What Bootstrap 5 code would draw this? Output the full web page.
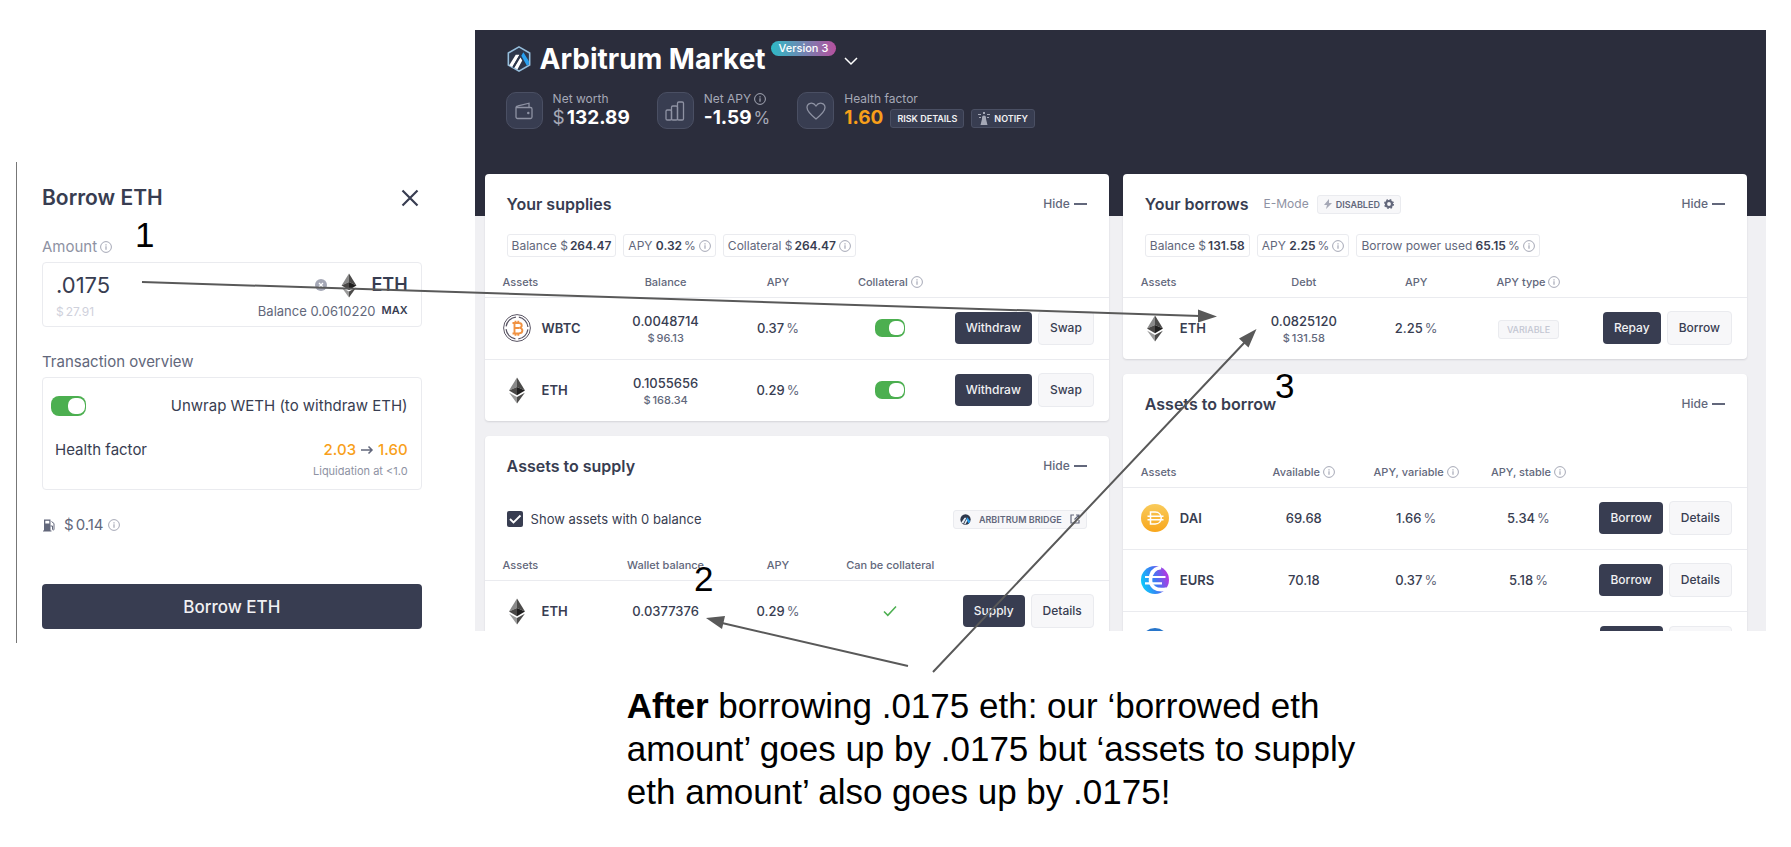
<!DOCTYPE html>
<html lang="en">
<head>
<meta charset="utf-8">
<meta name="viewport" content="width=device-width, initial-scale=1">
<title>Borrowing ETH on Arbitrum Market</title>
<link href="https://cdn.jsdelivr.net/npm/bootstrap@5.3.0/dist/css/bootstrap.min.css" rel="stylesheet">
<style>
  :root { --ink:#383d51; --muted:#62677b; --soft:#8e92a3; --line:#eaebef; --green:#4caf50; --orange:#f89f1a; }
  body { font-family:Inter,"Noto Sans",sans-serif; font-size:13px; line-height:20px; color:var(--ink); background:#fff; }
  h1,h2,p { margin:0; }
  svg { display:block; flex:none; }
  .stage { position:relative; }
  .ink { color:var(--ink); } .muted { color:var(--muted); } .soft { color:var(--soft); } .orange { color:var(--orange); }
  .i-info { width:12px; height:12px; color:#a5a8b6; }
  .near { display:flex; align-items:center; gap:3px; }
  .cur { margin-right:2px; }

  /* borrow dialog */
  .side { flex:none; width:26.5%; padding:162px 53px 0 16px; }
  .dialog { border-left:1px solid #777; padding:22px 0 14px 25px; font-size:15px; }
  .dialog h2 { font-size:21px; line-height:28px; font-weight:600; }
  .closer { background:none; border:0; padding:0 3px 0 0; color:var(--ink); }
  .amount-label { margin-top:25px; }
  .field { border:1px solid var(--line); border-radius:4px; padding:8px 13px 7px; margin-top:5px; }
  .amount { border:0; padding:0; flex:1 1 0; min-width:0; font-size:22px; line-height:28px; height:28px; color:var(--ink); outline:0; }
  .unit-name { font-size:18px; font-weight:600; }
  .worth { color:#cfd1dc; font-size:12px; }
  .balance { font-size:13px; margin-right:6px; }
  .max { font-size:11px; font-weight:600; }
  .section-gap { margin-top:25px; }
  .overview { border:1px solid var(--line); border-radius:4px; padding:18px 13px 10px 8px; margin-top:5px; }
  .small-note { font-size:11px; line-height:16px; margin-top:3px; }
  .cta { background:var(--ink); color:#f1f1f3; border:0; border-radius:4px; height:45px; font-size:17px; font-weight:500; margin-top:49px; }

  /* toggles */
  .toggle { appearance:none; display:block; width:30px; height:18px; padding:2px 1px 2px 14px; margin:0; border-radius:7px; background:var(--green); }
  .toggle::before { content:""; display:block; width:15px; height:14px; border-radius:6px; background:#fff; }
  .toggle.wide { width:35px; height:20px; border-radius:8px; padding-left:17px; }
  .toggle.wide::before { width:17px; height:16px; border-radius:7px; }

  /* dashboard */
  .dash { min-width:0; margin:30px 25px 0 0; height:601px; overflow:hidden; background:#f0f0f3; }
  .top-band { background:#2b2d3c; color:#fff; height:186px; padding:11px 31px 0; }
  .top-band h1 { font-size:28px; line-height:36px; font-weight:700; }
  .logo { margin-top:5px; }
  .version { font-size:11px; line-height:15px; font-weight:500; border-radius:8px; padding:0 8px; margin-left:5px; background:linear-gradient(90deg,#2ebac6,#b6509e); }
  .stats { margin-top:15px; gap:27px; }
  .stat { gap:10px; }
  .tile { width:37px; height:37px; border-radius:10px; border:1px solid #4a4f63; background:#383d51; color:#8e92a3; display:flex; align-items:center; justify-content:center; }
  .stat-label { font-size:12px; line-height:14px; color:#a5a8b6; }
  .stat-value { font-size:19px; line-height:24px; font-weight:700; }
  .stat-value .unit { font-weight:400; color:#a5a8b6; }
  .stat-value .after { font-size:17px; margin-left:2px; }
  .tag-dark { background:#383d51; border:1px solid #4a4f63; border-radius:3px; color:#f1f1f3; font-size:9px; line-height:17px; font-weight:600; padding:0 6px; }
  .tags { gap:7px; }
  .columns { display:grid; grid-template-columns:1fr 1fr; gap:14px; padding:0 19px 0 10px; margin-top:-42px; align-items:start; }
  .stack { display:grid; gap:15px; }
  .panel { background:#fff; border-radius:4px; box-shadow:0 1px 2px rgba(40,42,60,.14); }
  .panel-head { height:60px; padding:0 22px; }
  .panel-head h2 { font-size:16px; line-height:20px; font-weight:600; }
  .hide { border:0; background:none; padding:0; font-size:12px; font-weight:500; color:var(--muted); }
  .dash-mark { width:13px; height:2px; background:var(--muted); }
  .emode { margin-left:15px; font-size:12px; }
  .chips { padding:0 22px; gap:7px; margin-bottom:9px; }
  .chip { border:1px solid var(--line); border-radius:3px; padding:0 4px; font-size:12px; line-height:21px; color:var(--muted); }
  .chip b { font-weight:600; color:var(--ink); }
  .filter { height:46px; padding:0 22px; margin-bottom:7px; }
  .tag-light { background:#f7f7f9; border:1px solid var(--line); border-radius:3px; font-size:9px; line-height:17px; font-weight:600; color:var(--muted); padding:0 6px; }
  .bridge { gap:8px; }
  .variable { color:#c3c6d2; font-weight:500; padding:0 8px; }
  .grid-table { width:100%; table-layout:fixed; border-collapse:collapse; }
  .market { margin-top:22px; }
  .grid-table th { font-size:11px; line-height:16px; font-weight:500; color:var(--muted); text-align:center; height:31px; padding:2px 0 0; border-bottom:1px solid var(--line); }
  .grid-table td { height:62px; padding:0; text-align:center; vertical-align:middle; font-weight:500; border-bottom:1px solid var(--line); }
  .grid-table tr:last-child td { border-bottom:0; }
  .grid-table th:first-child, .grid-table td:first-child { text-align:left; padding-left:18px; }
  .grid-table td:last-child { padding-right:15px; }
  .c-asset { width:20%; } .c-num { width:18%; } .c-act { width:26%; }
  .asset { display:flex; align-items:center; gap:11px; }
  .coin { width:28px; height:28px; }
  .name { font-weight:600; }
  .sub { font-size:11px; line-height:14px; color:var(--muted); }
  .pct { color:var(--muted); font-weight:400; margin-left:2px; }
  .acts { display:flex; align-items:center; justify-content:flex-end; gap:6px; }
  .btn-a, .btn-b { border-radius:4px; font-size:12px; line-height:20px; font-weight:500; white-space:nowrap; padding:6px 11px; }
  .btn-a { background:var(--ink); color:#f1f1f3; border:0; }
  .btn-b { background:#f7f7f9; color:var(--ink); border:1px solid var(--line); }
  .acts .blank { width:63px; height:32px; }
  .check-box { appearance:none; width:16px; height:16px; margin:0; border-radius:2px; background:var(--ink) url("data:image/svg+xml,%3Csvg xmlns='http://www.w3.org/2000/svg' viewBox='0 0 16 16'%3E%3Cpath d='M3 8l3.5 3.5L13.5 4.5' fill='none' stroke='white' stroke-width='1.8'/%3E%3C/svg%3E"); }

  /* notes over the two captures */
  .arrows { position:absolute; left:0; top:0; width:100%; height:auto; pointer-events:none; font-family:"Liberation Sans",Arial,sans-serif; font-size:35px; }
  .caption { width:43%; margin:41px 0 0 35%; font-family:"Liberation Sans",Arial,sans-serif; font-size:35px; line-height:43px; color:#000; }
</style>
</head>
<body>
<svg width="0" height="0" class="position-absolute" aria-hidden="true">
  <defs>
    <linearGradient id="gDai" x1="0" y1="0" x2="0" y2="1"><stop offset="0" stop-color="#f9cb5b"/><stop offset="1" stop-color="#f8a61c"/></linearGradient>
    <linearGradient id="gEur" x1="0" y1=".6" x2="1" y2=".3"><stop offset="0" stop-color="#0ccbfb"/><stop offset=".5" stop-color="#3f78f2"/><stop offset="1" stop-color="#c12fe0"/></linearGradient>
    <symbol id="info" viewBox="0 0 12 12"><circle cx="6" cy="6" r="5.4" fill="none" stroke="currentColor"/><path d="M6 5.3v3.4M6 3.2v1.2" stroke="currentColor" stroke-width="1.2"/></symbol>
    <symbol id="eth" viewBox="0 0 28 28"><path d="M14 1.5 6 14.5l8-3.6z" fill="#8a8a8a"/><path d="M14 1.5 22 14.5l-8-3.6z" fill="#4c4b4a"/><path d="M6 14.5l8-3.6v8.400z" fill="#4a4847"/><path d="M22 14.5l-8-3.6v8.400z" fill="#201f1f"/><path d="M6.200 16.700 14 21v6.500z" fill="#9a9a9a"/><path d="M21.800 16.700 14 21v6.500z" fill="#4c4b4a"/></symbol>
    <symbol id="wbtc" viewBox="0 0 28 28"><circle cx="14" cy="14" r="13.4" fill="#fff" stroke="#5a5564"/><circle cx="14" cy="14" r="11" fill="none" stroke="#5a5564" stroke-width="1.2" stroke-dasharray="14.3 3" stroke-dashoffset="-1.5"/><path d="M9.500 9h6.200c4 0 3.900 4.600.5 4.900 4.400.3 4.200 5.600-.4 5.600H9.500M11.500 9v10.500M11.500 14h4.500M12.500 6.800V9M15.300 6.800V9M12.500 19.500v2.300M15.300 19.500v2.300" fill="none" stroke="#f09242" stroke-width="1.9"/></symbol>
    <symbol id="dai" viewBox="0 0 28 28"><circle cx="14" cy="14" r="14" fill="url(#gDai)"/><path d="M9.500 8h4.700c8 0 8 12 0 12H9.500zM6.500 12.300h16M6.500 15.700h16" fill="none" stroke="#fff" stroke-width="1.500"/></symbol>
    <symbol id="eurs" viewBox="0 0 28 28"><circle cx="14" cy="14" r="14" fill="url(#gEur)"/><path d="M20 1.500C12 2.500 9.500 8 9.500 14S14 25.500 26 23" fill="none" stroke="#fff" stroke-width="3.600"/><path d="M4 11h20.500M4 17.300h17" fill="none" stroke="#fff" stroke-width="2.200"/></symbol>
    <symbol id="arb" viewBox="0 0 26 28"><path d="M13 1 24.500 7.500v13L13 27 1.500 20.500v-13z" fill="#2d374b" stroke="#96bedc" stroke-width="1.700"/><path d="M15.500 10.500l2.200-3.700 6 9.500v3.600l-2.200 1.300z" fill="#28a0f0"/><path d="M9.500 9.500h4L5.700 22.500l-3.200-1.900zM14.500 12.500l2 3.200-5.200 9.500-3.300-1.800z" fill="#fff"/><path d="M14 9h1.800l-8.400 14.800-1.500-.9z" fill="#2d374b"/></symbol>
    <symbol id="arbcoin" viewBox="0 0 12 12"><circle cx="6" cy="6" r="5.600" fill="#2d374b"/><path d="M8 3.500l3.200 4.800-1.700 2L6.900 6z" fill="#28a0f0"/><path d="M5 4h2L3.400 10.600 1.300 9.400zM7 5.800l1 1.500-2 4-1.500-.6z" fill="#e8eef5"/></symbol>
  </defs>
</svg>

<div class="stage">
  <main class="d-flex align-items-start">
    <aside class="side">
      <form class="dialog">
        <div class="d-flex justify-content-between align-items-center">
          <h2>Borrow ETH</h2>
          <button type="button" class="closer" aria-label="Close"><svg width="18" height="18" viewBox="0 0 18 18"><path d="M1.500 1.500l15 15M16.500 1.500l-15 15" stroke="currentColor" stroke-width="2.200"/></svg></button>
        </div>
        <div class="near amount-label"><label for="amt" class="soft">Amount</label><svg class="i-info"><use href="#info"/></svg></div>
        <div class="field">
          <div class="d-flex align-items-center">
            <input id="amt" class="amount" type="text" size="6" value=".0175">
            <svg width="12" height="12" viewBox="0 0 12 12"><circle cx="6" cy="6" r="6" fill="#a5a8b6"/><path d="M4 4l4 4M8 4L4 8" stroke="#fff" stroke-width="1.3"/></svg>
            <svg class="ms-2 me-2" width="28" height="26" viewBox="0 0 28 28"><use href="#eth"/></svg>
            <span class="unit-name">ETH</span>
          </div>
          <div class="d-flex align-items-center lh-sm mt-1">
            <span class="worth"><span class="cur">$</span>27.91</span>
            <span class="ms-auto muted balance">Balance 0.0610220</span>
            <b class="max">MAX</b>
          </div>
        </div>
        <p class="muted section-gap">Transaction overview</p>
        <div class="overview">
          <div class="d-flex justify-content-between align-items-center">
            <input id="unwrap" type="checkbox" role="switch" class="toggle wide" checked>
            <label for="unwrap">Unwrap WETH (to withdraw ETH)</label>
          </div>
          <div class="d-flex justify-content-between mt-4 ps-1">
            <span>Health factor</span>
            <span class="d-flex align-items-center gap-1 fw-medium"><span class="orange">2.03</span><svg width="14" height="10" viewBox="0 0 14 10"><path d="M1 5h11M8.500 1.500L12 5 8.500 8.500" fill="none" stroke="#62677b" stroke-width="1.500"/></svg><span class="orange">1.60</span></span>
          </div>
          <p class="small-note text-end soft">Liquidation at &lt;1.0</p>
        </div>
        <div class="d-flex align-items-center muted section-gap">
          <svg width="14" height="14" viewBox="0 0 14 14"><path d="M2 1.500h6.500V13H2z" fill="#62677b"/><path d="M3.300 2.800h4v2.700h-4z" fill="#fff"/><path d="M1 13h8.500M9.500 3.500l2.500 2v5.800c0 1-1.500 1-1.500 0V8H8.500" fill="none" stroke="#62677b"/></svg>
          <span class="ms-2"><span class="cur">$</span>0.14</span><svg class="i-info ms-1"><use href="#info"/></svg>
        </div>
        <button type="button" class="cta w-100">Borrow ETH</button>
      </form>
    </aside>

    <section class="dash flex-grow-1">
      <header class="top-band">
        <div class="d-flex">
          <svg width="26" height="26" viewBox="0 0 26 28" class="logo"><use href="#arb"/></svg>
          <h1 class="ms-2">Arbitrum Market</h1>
          <span class="version align-self-start">Version 3</span>
          <svg class="ms-2 mt-3" width="14" height="9" viewBox="0 0 14 9"><path d="M1 1l6 6 6-6" fill="none" stroke="#fff" stroke-width="1.500"/></svg>
        </div>
        <div class="d-flex stats">
          <div class="d-flex stat">
            <span class="tile"><svg width="18" height="18" viewBox="0 0 18 18" fill="none" stroke="currentColor" stroke-width="1.300"><path d="M1 5.500h14.500a1.500 1.500 0 011.500 1.500v8a1.500 1.500 0 01-1.500 1.500h-13A1.500 1.500 0 011 15V5.500c0-1 1-1.500 2-1.700L14 1.200v4"/><circle cx="13.300" cy="11" r=".6" fill="currentColor"/></svg></span>
            <div><div class="stat-label">Net worth</div><div class="stat-value"><span class="unit cur">$</span>132.89</div></div>
          </div>
          <div class="d-flex stat">
            <span class="tile"><svg width="20" height="20" viewBox="0 0 20 20" fill="none" stroke="currentColor" stroke-width="1.300"><rect x="1" y="9" width="5.500" height="10" rx="1.300"/><rect x="6.500" y="5" width="6" height="14" rx="1.300"/><rect x="12.500" y="1" width="6" height="18" rx="1.300"/></svg></span>
            <div><div class="stat-label near">Net APY <svg class="i-info"><use href="#info"/></svg></div><div class="stat-value">-1.59<span class="unit after">%</span></div></div>
          </div>
          <div class="d-flex stat">
            <span class="tile"><svg width="20" height="18" viewBox="0 0 20 18" fill="none" stroke="currentColor" stroke-width="1.300"><path d="M10 17C5 13 1 9.500 1 5.600 1 .8 7-.6 10 4c3-4.600 9-3.200 9 1.600C19 9.500 15 13 10 17z"/></svg></span>
            <div><div class="stat-label">Health factor</div>
              <div class="d-flex align-items-center tags"><span class="stat-value orange">1.60</span>
                <button type="button" class="tag-dark">RISK DETAILS</button>
                <button type="button" class="tag-dark d-flex align-items-center gap-1"><svg width="12" height="13" viewBox="0 0 12 13" fill="#a5a8b6"><path d="M6 3.500a2 2 0 012 2V7l1.500 6h-7L4 7V5.500a2 2 0 012-2zM5 0h2v2H5zM0 2h3v1H0zM9 2h3v1H9zM1 5h2v1H1zM9 5h2v1H9z"/></svg>NOTIFY</button>
              </div></div>
          </div>
        </div>
      </header>

      <div class="columns">
        <div class="stack">
          <section class="panel">
            <div class="panel-head d-flex align-items-center justify-content-between"><h2>Your supplies</h2><button type="button" class="hide d-flex align-items-center gap-1">Hide <span class="dash-mark"></span></button></div>
            <div class="chips d-flex">
              <span class="chip">Balance <span class="cur">$</span><b>264.47</b></span>
              <span class="chip near"><span>APY <b>0.32</b><span class="pct">%</span></span><svg class="i-info"><use href="#info"/></svg></span>
              <span class="chip near"><span>Collateral <span class="cur">$</span><b>264.47</b></span><svg class="i-info"><use href="#info"/></svg></span>
            </div>
            <table class="grid-table">
              <colgroup><col class="c-asset"><col class="c-num"><col class="c-num"><col class="c-num"><col class="c-act"></colgroup>
              <thead><tr><th>Assets</th><th>Balance</th><th>APY</th><th><span class="near justify-content-center">Collateral <svg class="i-info"><use href="#info"/></svg></span></th><th></th></tr></thead>
              <tbody>
                <tr><td><span class="asset"><svg class="coin"><use href="#wbtc"/></svg><span class="name">WBTC</span></span></td><td>0.0048714<div class="sub"><span class="cur">$</span>96.13</div></td><td>0.37<span class="pct">%</span></td><td><input type="checkbox" role="switch" aria-label="WBTC collateral" class="toggle mx-auto" checked></td><td><span class="acts"><button type="button" class="btn-a">Withdraw</button><button type="button" class="btn-b">Swap</button></span></td></tr>
                <tr><td><span class="asset"><svg class="coin"><use href="#eth"/></svg><span class="name">ETH</span></span></td><td>0.1055656<div class="sub"><span class="cur">$</span>168.34</div></td><td>0.29<span class="pct">%</span></td><td><input type="checkbox" role="switch" aria-label="ETH collateral" class="toggle mx-auto" checked></td><td><span class="acts"><button type="button" class="btn-a">Withdraw</button><button type="button" class="btn-b">Swap</button></span></td></tr>
              </tbody>
            </table>
          </section>
          <section class="panel">
            <div class="panel-head d-flex align-items-center justify-content-between"><h2>Assets to supply</h2><button type="button" class="hide d-flex align-items-center gap-1">Hide <span class="dash-mark"></span></button></div>
            <div class="filter d-flex align-items-center justify-content-between">
              <span class="d-flex align-items-center gap-2"><input id="zero" type="checkbox" class="check-box" checked><label for="zero">Show assets with 0 balance</label></span>
              <a href="#bridge" class="tag-light ink d-flex align-items-center text-decoration-none bridge"><svg width="11" height="11"><use href="#arbcoin"/></svg>ARBITRUM BRIDGE<svg width="10" height="10" viewBox="0 0 10 10" fill="none" stroke="#62677b" stroke-width="1.200"><path d="M4 1H1v8h8V6M6 1h3v3M9 1L4.500 5.500"/></svg></a>
            </div>
            <table class="grid-table">
              <colgroup><col class="c-asset"><col class="c-num"><col class="c-num"><col class="c-num"><col class="c-act"></colgroup>
              <thead><tr><th>Assets</th><th>Wallet balance</th><th>APY</th><th>Can be collateral</th><th></th></tr></thead>
              <tbody>
                <tr><td><span class="asset"><svg class="coin"><use href="#eth"/></svg><span class="name">ETH</span></span></td><td>0.0377376</td><td>0.29<span class="pct">%</span></td><td><svg class="mx-auto" width="14" height="12" viewBox="0 0 14 12"><path d="M1 6.500l3.800 3.800L13 1.500" fill="none" stroke="#4caf50" stroke-width="1.500"/></svg></td><td><span class="acts"><button type="button" class="btn-a">Supply</button><button type="button" class="btn-b">Details</button></span></td></tr>
              </tbody>
            </table>
          </section>
        </div>

        <div class="stack">
          <section class="panel">
            <div class="panel-head d-flex align-items-center"><h2>Your borrows</h2><span class="soft emode">E-Mode</span><button type="button" class="tag-light ms-2 d-flex align-items-center gap-1"><svg width="8" height="10" viewBox="0 0 8 10"><path d="M5 0L0 6h3l-1 4 6-6H5z" fill="#a5a8b6"/></svg>DISABLED<svg width="10" height="10" viewBox="0 0 10 10"><circle cx="5" cy="5" r="3" fill="none" stroke="#62677b" stroke-width="2.200"/><circle cx="5" cy="5" r="4.300" fill="none" stroke="#62677b" stroke-width="1.400" stroke-dasharray="1.700 1.700"/></svg></button><button type="button" class="hide d-flex align-items-center gap-1 ms-auto">Hide <span class="dash-mark"></span></button></div>
            <div class="chips d-flex">
              <span class="chip">Balance <span class="cur">$</span><b>131.58</b></span>
              <span class="chip near"><span>APY <b>2.25</b><span class="pct">%</span></span><svg class="i-info"><use href="#info"/></svg></span>
              <span class="chip near"><span>Borrow power used <b>65.15</b><span class="pct">%</span></span><svg class="i-info"><use href="#info"/></svg></span>
            </div>
            <table class="grid-table">
              <colgroup><col class="c-asset"><col class="c-num"><col class="c-num"><col class="c-num"><col class="c-act"></colgroup>
              <thead><tr><th>Assets</th><th>Debt</th><th>APY</th><th><span class="near justify-content-center">APY type <svg class="i-info"><use href="#info"/></svg></span></th><th></th></tr></thead>
              <tbody>
                <tr><td><span class="asset"><svg class="coin"><use href="#eth"/></svg><span class="name">ETH</span></span></td><td>0.0825120<div class="sub"><span class="cur">$</span>131.58</div></td><td>2.25<span class="pct">%</span></td><td><button type="button" class="tag-light variable" disabled>VARIABLE</button></td><td><span class="acts"><button type="button" class="btn-a">Repay</button><button type="button" class="btn-b">Borrow</button></span></td></tr>
              </tbody>
            </table>
          </section>
          <section class="panel">
            <div class="panel-head d-flex align-items-center justify-content-between"><h2>Assets to borrow</h2><button type="button" class="hide d-flex align-items-center gap-1">Hide <span class="dash-mark"></span></button></div>
            <table class="grid-table market">
              <colgroup><col class="c-asset"><col class="c-num"><col class="c-num"><col class="c-num"><col class="c-act"></colgroup>
              <thead><tr><th>Assets</th><th><span class="near justify-content-center">Available <svg class="i-info"><use href="#info"/></svg></span></th><th><span class="near justify-content-center">APY, variable <svg class="i-info"><use href="#info"/></svg></span></th><th><span class="near justify-content-center">APY, stable <svg class="i-info"><use href="#info"/></svg></span></th><th></th></tr></thead>
              <tbody>
                <tr><td><span class="asset"><svg class="coin"><use href="#dai"/></svg><span class="name">DAI</span></span></td><td>69.68</td><td>1.66<span class="pct">%</span></td><td>5.34<span class="pct">%</span></td><td><span class="acts"><button type="button" class="btn-a">Borrow</button><button type="button" class="btn-b">Details</button></span></td></tr>
                <tr><td><span class="asset"><svg class="coin"><use href="#eurs"/></svg><span class="name">EURS</span></span></td><td>70.18</td><td>0.37<span class="pct">%</span></td><td>5.18<span class="pct">%</span></td><td><span class="acts"><button type="button" class="btn-a">Borrow</button><button type="button" class="btn-b">Details</button></span></td></tr>
                <tr><td><span class="asset"><svg class="coin" viewBox="0 0 28 28"><circle cx="14" cy="14" r="14" fill="#2775ca"/></svg></span></td><td></td><td></td><td></td><td><span class="acts"><button type="button" class="btn-a blank" aria-label="Borrow"></button><button type="button" class="btn-b blank" aria-label="Details"></button></span></td></tr>
              </tbody>
            </table>
          </section>
        </div>
      </div>
    </section>
  </main>
  <p class="caption"><b>After</b> borrowing .0175 eth: our ‘borrowed eth amount’ goes up by .0175 but ‘assets to supply eth amount’ also goes up by .0175!</p>

  <svg class="arrows" viewBox="0 0 1791 847">
    <g stroke="#595959" stroke-width="2"><path d="M142 282L1200 316M933 672L1245 342M908 666L722 623"/></g>
    <g fill="#595959"><path d="M1217 316.500L1198 309.500V322.500zM1256.500 329L1239 338.500 1248.500 347.500zM706 618L725 616 722 629z"/></g>
    <text x="135" y="247">1</text><text x="694" y="591">2</text><text x="1275" y="398">3</text>
  </svg>
</div>
<script src="https://cdn.jsdelivr.net/npm/bootstrap@5.3.0/dist/js/bootstrap.bundle.min.js"></script>
</body>
</html>
